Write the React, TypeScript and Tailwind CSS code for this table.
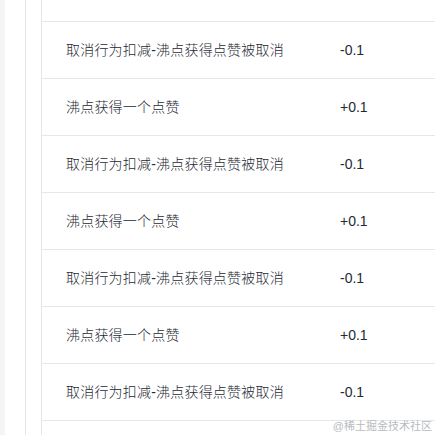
const rows = [
  { title: "取消行为扣减-沸点获得点赞被取消", value: "-0.1" },
  { title: "沸点获得一个点赞", value: "+0.1" },
  { title: "取消行为扣减-沸点获得点赞被取消", value: "-0.1" },
  { title: "沸点获得一个点赞", value: "+0.1" },
  { title: "取消行为扣减-沸点获得点赞被取消", value: "-0.1" },
  { title: "沸点获得一个点赞", value: "+0.1" },
  { title: "取消行为扣减-沸点获得点赞被取消", value: "-0.1" },
];

export default function App() {
  return (
    <div
      className="relative flex h-[435px] w-[435px] overflow-hidden bg-white text-[#252933]"
      style={{ fontFamily: '"Liberation Sans", "Noto Sans CJK SC", sans-serif' }}
    >
      <div className="w-[5px] shrink-0 bg-[#f4f5f5]" />
      <div className="w-[21px] shrink-0 border-r border-[#e4e6eb]" />
      <div className="w-[16px] shrink-0 border-r border-[#e4e6eb]" />
      <div className="flex flex-1 flex-col">
        <div className="h-[22px] shrink-0 border-b border-[#e4e6eb]" />
        {rows.map((r, i) => (
          <div key={i} className="flex h-[57px] shrink-0 items-center border-b border-[#e4e6eb] text-[14px] font-light">
            <span className="w-[298px] shrink-0 pl-6 tracking-[0.2px]">{r.title}</span>
            <span>{r.value}</span>
          </div>
        ))}
      </div>
      {/* 水印 */}
      <span className="absolute bottom-[1px] right-[3px] text-[11px] text-[#b8bbbf]">@稀土掘金技术社区</span>
    </div>
  );
}
